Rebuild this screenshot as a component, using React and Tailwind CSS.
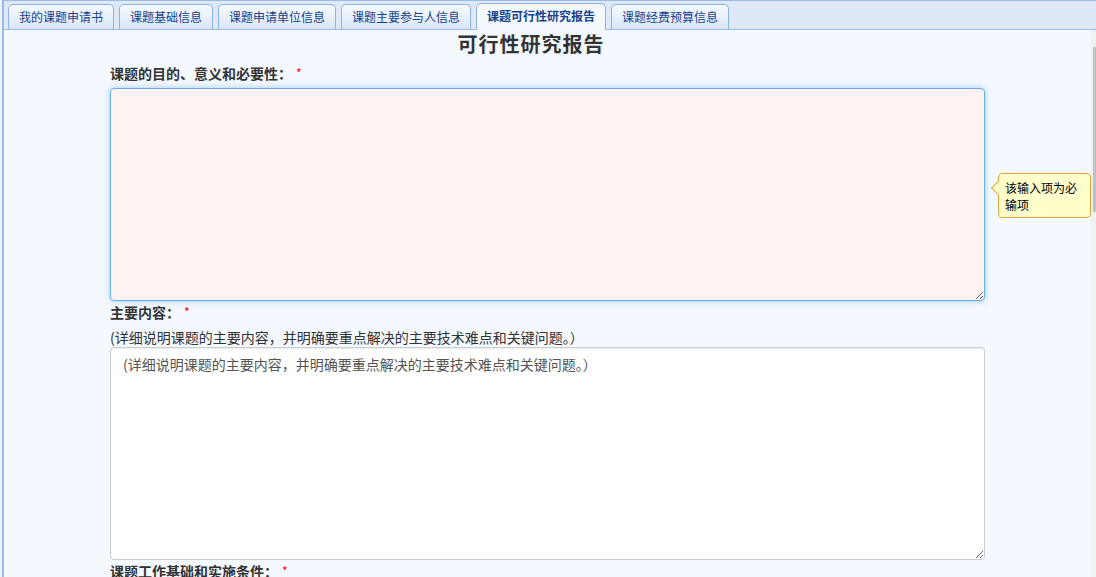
import { useState } from "react";

const tabs = [
  "我的课题申请书",
  "课题基础信息",
  "课题申请单位信息",
  "课题主要参与人信息",
  "课题可行性研究报告",
  "课题经费预算信息",
];

const font = { fontFamily: '"Noto Sans CJK SC", "Liberation Sans", sans-serif' };

// Label with a red required star
function Label({ text }) {
  return (
    <div className="h-[20px] leading-[20px] text-[14px] font-bold text-[#333]">
      {text}
      <span className="ml-[4px] text-[12px] font-normal text-[#f00] align-top">*</span>
    </div>
  );
}

export default function App() {
  const [active] = useState(4);
  const hint = "(详细说明课题的主要内容，并明确要重点解决的主要技术难点和关键问题。）";

  return (
    <div
      className="w-[1096px] h-[577px] overflow-hidden bg-[#eef3fb] pl-[2px]"
      style={font}
    >
      <div className="h-full flex flex-col border-l-2 border-t border-[#99bbe8]">
        {/* Tab strip */}
        <div className="h-[29px] shrink-0 bg-[#dfe8f6] border-b border-[#99bbe8] flex items-end gap-[5px] pl-[4px]">
          {tabs.map((t, i) =>
            i === active ? (
              <div
                key={t}
                className="h-[27px] -mb-px px-[10px] rounded-t-[5px] border border-b-0 border-[#8db2e3] bg-[#f4f8ff] text-[12px] font-bold text-[#15428b] leading-[24px]"
              >
                {t}
              </div>
            ) : (
              <div
                key={t}
                className="h-[25px] px-[10px] rounded-t-[5px] border border-b-0 border-[#8db2e3] bg-gradient-to-b from-[#f7faff] to-[#d9e6f8] text-[12px] text-[#15428b] leading-[24px]"
              >
                {t}
              </div>
            )
          )}
        </div>

        <div className="flex-1 flex min-h-0">
          {/* Main form */}
          <div className="flex-1 bg-[#f4f8ff] relative">
            <div className="w-[1054px] text-center pt-[2px] h-[26px] leading-[24px] text-[20px] font-bold text-[#333] tracking-[1px]">
              可行性研究报告
            </div>
            <div className="ml-[106px] w-[875px] pt-[7px]">
              <Label text="课题的目的、意义和必要性：" />
              <textarea
                className="mt-[5px] block w-[875px] h-[213px] rounded-[4px] border border-[#66afe9] bg-[#fff2f2] shadow-[0_0_6px_rgba(102,175,233,0.6)] outline-none"
              />
              <div className="mt-px">
                <Label text="主要内容：" />
              </div>
              <div className="mt-[5px] h-[20px] leading-[20px] text-[14px] text-[#333]">
                {hint}
              </div>
              <textarea
                placeholder={hint}
                className="block w-[875px] h-[213px] rounded-[4px] border border-[#ccc] bg-white shadow-[inset_0_1px_1px_rgba(0,0,0,0.075)] px-[12px] py-[6px] text-[14px] leading-[20px] placeholder:text-[#555] outline-none"
                style={font}
              />
              <div className="mt-px">
                <Label text="课题工作基础和实施条件：" />
              </div>
            </div>

            {/* Validation tooltip */}
            <div className="absolute left-[994px] top-[143px] w-[93px] h-[45px] rounded-[4px] border border-[#e0a83a] bg-[#ffffcc] pl-[6px] pr-[4px] py-[5px] text-[12px] leading-[17px] text-[#000]">
              <div className="absolute -left-[6px] top-[9px] w-[10px] h-[10px] rotate-45 bg-[#ffffcc] border-l border-b border-[#e0a83a]" />
              <span className="relative">该输入项为必输项</span>
            </div>
          </div>

          {/* Scrollbar */}
          <div className="w-[5px] bg-[#f1f1f1] pt-[17px]">
            <div className="ml-[2px] w-[3px] h-[165px] bg-[#c1c1c1]" />
          </div>
        </div>
      </div>
    </div>
  );
}
